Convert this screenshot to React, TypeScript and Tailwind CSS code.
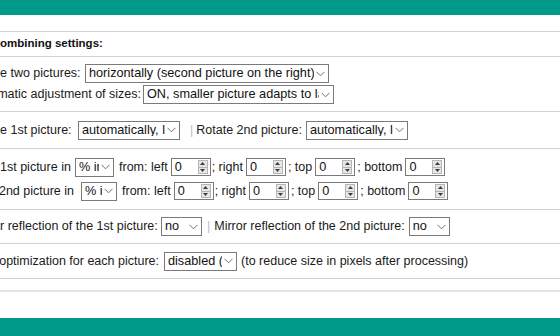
import React from "react";

const Chevron = () => (
  <svg width="9" height="6" viewBox="0 0 9 6" className="shrink-0">
    <path d="M0.5 0.8 L4.5 4.8 L8.5 0.8" fill="none" stroke="#707070" strokeWidth="1" />
  </svg>
);

function Select({ w, text }: { w: string; text: string }) {
  return (
    <div className={`${w} h-[19px] shrink-0 flex items-center border border-[#7a7a7a] bg-white pl-[3px] pr-[3px]`}>
      <span className="flex-1 overflow-hidden whitespace-nowrap text-[12.7px] leading-none text-[#111] mr-[2px]">{text}</span>
      <Chevron />
    </div>
  );
}

function Spin({ ml }: { ml: string }) {
  return (
    <div className={`${ml} w-[40px] h-[18px] shrink-0 flex items-center border border-[#7a7a7a] bg-white pl-[3px] pr-[2px]`}>
      <span className="flex-1 text-[12.7px] leading-none text-[#111]">0</span>
      <div className="w-[10px] h-[14px] flex flex-col border border-[#b5b5b5] bg-[#e6e6e6]">
        <div className="flex-1 flex items-center justify-center">
          <svg width="5" height="3" viewBox="0 0 5 3"><path d="M0 3 L2.5 0 L5 3 Z" fill="#3a3a3a" /></svg>
        </div>
        <div className="h-[1px] bg-[#b5b5b5]" />
        <div className="flex-1 flex items-center justify-center">
          <svg width="5" height="3" viewBox="0 0 5 3"><path d="M0 0 L2.5 3 L5 0 Z" fill="#3a3a3a" /></svg>
        </div>
      </div>
    </div>
  );
}

const Sep = ({ ml }: { ml: string }) => <span className={`${ml} text-[#bdbdbd]`}>|</span>;

// fixed-width label cell: left-aligned when it fits, spills off the left edge when it doesn't
function Label({ w, children }: { w: string; children: React.ReactNode }) {
  return (
    <div className={`${w} shrink-0 flex justify-end`}>
      <span className="flex-1 min-w-max">{children}</span>
    </div>
  );
}

function CropRow({ label, lw, sw, sml }: { label: string; lw: string; sw: string; sml: string }) {
  return (
    <div className="flex items-center">
      <Label w={lw}>{label}</Label>
      <div className={sml}>
        <Select w={sw} text="% in" />
      </div>
      <span className="ml-[5px]">from: left</span>
      <Spin ml="ml-[3px]" />
      <span className="ml-[1px]">; right</span>
      <Spin ml="ml-[3px]" />
      <span className="ml-[2px]">; top</span>
      <Spin ml="ml-[3px]" />
      <span className="ml-[2px]">; bottom</span>
      <Spin ml="ml-[3px]" />
    </div>
  );
}

export default function App() {
  return (
    <div
      className="w-[560px] h-[336px] overflow-hidden bg-white flex flex-col text-[12.5px] text-[#1a1a1a] whitespace-nowrap"
      style={{ fontFamily: '"Liberation Sans", Arial, sans-serif' }}
    >
      <div className="h-[15px] shrink-0 bg-[#009a8b]" />
      <div className="h-[16px] shrink-0" />

      <div className="h-[25px] shrink-0 border-t border-[#d2d2d2] flex items-center">
        <span className="font-bold text-[11.5px] text-[#111]">ombining settings:</span>
      </div>

      <div className="h-[55px] shrink-0 border-t border-[#d2d2d2] flex flex-col justify-center gap-[2px]">
        <div className="flex items-center">
          <Label w="w-[82px]">e two pictures:</Label>
          <div className="ml-[3px]">
            <Select w="w-[244px]" text="horizontally (second picture on the right)" />
          </div>
        </div>
        <div className="flex items-center">
          <Label w="w-[141px]">matic adjustment of sizes:</Label>
          <div className="ml-[2px]">
            <Select w="w-[191px]" text="ON, smaller picture adapts to larger" />
          </div>
        </div>
      </div>

      <div className="h-[37px] shrink-0 border-t border-[#d2d2d2] flex items-center">
        <Label w="w-[74px]">e 1st picture:</Label>
        <div className="ml-[4px]">
          <Select w="w-[102px]" text="automatically, lossless" />
        </div>
        <Sep ml="ml-[10px]" />
        <span className="ml-[3px]">Rotate 2nd picture:</span>
        <div className="ml-[4px]">
          <Select w="w-[102px]" text="automatically, lossless" />
        </div>
      </div>

      <div className="h-[61px] shrink-0 border-t border-[#d2d2d2] flex flex-col justify-center gap-[5px]">
        <CropRow label="1st picture in" lw="w-[71px]" sw="w-[39px]" sml="ml-[4px]" />
        <CropRow label="2nd picture in" lw="w-[74px]" sw="w-[36px]" sml="ml-[7px]" />
      </div>

      <div className="h-[34px] shrink-0 border-t border-[#d2d2d2] flex items-center">
        <Label w="w-[158px]">r reflection of the 1st picture:</Label>
        <div className="ml-[3px]">
          <Select w="w-[41px]" text="no" />
        </div>
        <Sep ml="ml-[5px]" />
        <span className="ml-[4px]">Mirror reflection of the 2nd picture:</span>
        <div className="ml-[4px]">
          <Select w="w-[41px]" text="no" />
        </div>
      </div>

      <div className="h-[35px] shrink-0 border-t border-[#d2d2d2] flex items-center">
        <Label w="w-[159px]">optimization for each picture:</Label>
        <div className="ml-[5px]">
          <Select w="w-[73px]" text="disabled (default)" />
        </div>
        <span className="ml-[4px]">(to reduce size in pixels after processing)</span>
      </div>

      <div className="h-[12px] shrink-0 border-t border-[#d2d2d2]" />
      <div className="h-[28px] shrink-0 border-t-2 border-[#e2e2e2]" />
      <div className="flex-1 bg-[#009a8b]" />
    </div>
  );
}
